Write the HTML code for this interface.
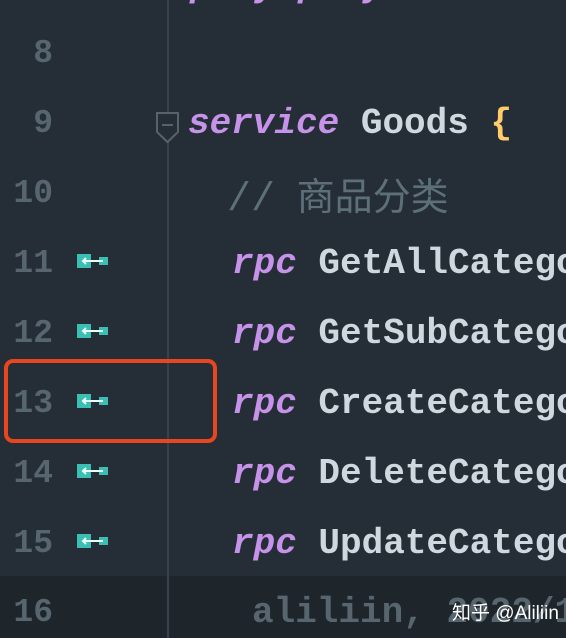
<!DOCTYPE html><html><head><style>
html,body{margin:0;width:566px;height:638px;overflow:hidden}
body{background:#252e36;position:relative;font-family:"Liberation Mono","Noto Sans CJK SC",monospace;font-weight:bold}
.cur{position:absolute;left:0;top:576px;width:566px;height:62px;background:#1e252b}
.div{position:absolute;left:167px;top:0;width:2px;height:638px;background:#38424a}
.ln{position:absolute;right:513px;font-size:33px;color:#56656e;line-height:70px}
.code{position:absolute;font-size:36px;line-height:70px;white-space:pre;color:#cfd8de}
.k{color:#c792ea;font-style:italic}
.c{color:#5d6f78;font-weight:normal}
.ic{position:absolute;left:77px;width:31px;height:14px}
.box{position:absolute;left:4px;top:359px;width:205px;height:76px;border:4px solid #e8461f;border-radius:9px}
</style></head><body>
<div class="cur"></div>
<div class="div"></div>
<div class="code k" style="left:190px;top:-48px">p  y p  y</div>
<div class="ln" style="top:19px">8</div>
<div class="ln" style="top:89px">9</div>
<div class="ln" style="top:159px">10</div>
<div class="ln" style="top:229px">11</div>
<div class="ln" style="top:299px">12</div>
<div class="ln" style="top:369px">13</div>
<div class="ln" style="top:439px">14</div>
<div class="ln" style="top:509px">15</div>
<div class="ln" style="top:578px">16</div>
<svg style="position:absolute;left:154px;top:112px" width="28" height="32"><path d="M3 1H24V20L13.5 30L3 20Z" fill="#252e36" stroke="#56636b" stroke-width="2"/><path d="M8 13H19" stroke="#56636b" stroke-width="2"/></svg>
<div class="code" style="left:188px;top:89px"><span class="k">service</span> Goods <span style="color:#ffcb6b">{</span></div>
<div class="code c" style="left:227px;top:159px"><span style="font-size:40px">//</span> <span style="font-family:'Noto Sans CJK SC',sans-serif;font-size:38px">商品分类</span></div>
<div class="code" style="left:232px;top:229px"><span class="k">rpc</span> GetAllCatego</div>
<div class="code" style="left:232px;top:299px"><span class="k">rpc</span> GetSubCatego</div>
<div class="code" style="left:232px;top:369px"><span class="k">rpc</span> CreateCatego</div>
<div class="code" style="left:232px;top:439px"><span class="k">rpc</span> DeleteCatego</div>
<div class="code" style="left:232px;top:509px"><span class="k">rpc</span> UpdateCatego</div>
<div class="code" style="left:252px;top:578px;color:#56656e">aliliin, 2022/1</div>
<div style="position:absolute;left:452px;top:598px;font-family:'Liberation Sans','Noto Sans CJK SC',sans-serif;font-weight:normal;font-size:19px;color:#fff">知乎 @Aliliin</div>
<svg class="ic" style="top:254px"><rect x="0" y="0" width="14" height="14" fill="#3bbfb5"/><rect x="22" y="3" width="9" height="8" fill="#3bbfb5"/><path d="M7 7H26M9 4L6 7L9 10" stroke="#e8fffb" stroke-width="2" fill="none"/></svg>
<svg class="ic" style="top:324px"><rect x="0" y="0" width="14" height="14" fill="#3bbfb5"/><rect x="22" y="3" width="9" height="8" fill="#3bbfb5"/><path d="M7 7H26M9 4L6 7L9 10" stroke="#e8fffb" stroke-width="2" fill="none"/></svg>
<svg class="ic" style="top:394px"><rect x="0" y="0" width="14" height="14" fill="#3bbfb5"/><rect x="22" y="3" width="9" height="8" fill="#3bbfb5"/><path d="M7 7H26M9 4L6 7L9 10" stroke="#e8fffb" stroke-width="2" fill="none"/></svg>
<svg class="ic" style="top:464px"><rect x="0" y="0" width="14" height="14" fill="#3bbfb5"/><rect x="22" y="3" width="9" height="8" fill="#3bbfb5"/><path d="M7 7H26M9 4L6 7L9 10" stroke="#e8fffb" stroke-width="2" fill="none"/></svg>
<svg class="ic" style="top:534px"><rect x="0" y="0" width="14" height="14" fill="#3bbfb5"/><rect x="22" y="3" width="9" height="8" fill="#3bbfb5"/><path d="M7 7H26M9 4L6 7L9 10" stroke="#e8fffb" stroke-width="2" fill="none"/></svg>
<div class="box"></div>
</body></html>
